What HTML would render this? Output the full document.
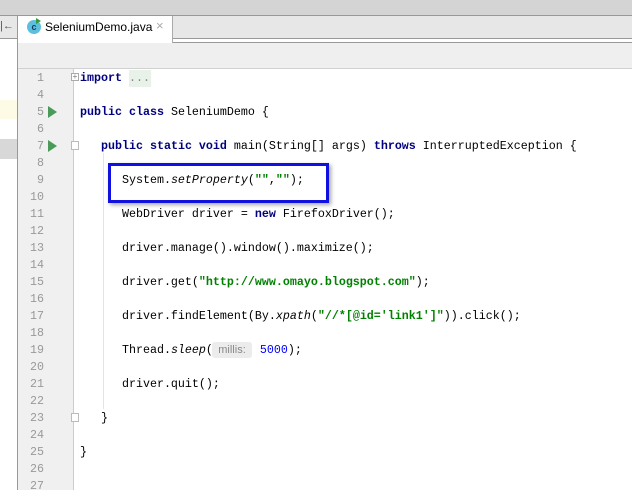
<!DOCTYPE html>
<html><head><style>
body{margin:0;width:632px;height:490px;overflow:hidden;background:#fff;position:relative;font-family:"Liberation Mono",monospace}
div{position:absolute;box-sizing:border-box}
.ln{left:18px;width:26px;text-align:right;color:#999;font-size:11.67px;line-height:17px}
.c{left:80px;font-size:11.67px;line-height:17px;white-space:pre;color:#000}
.k{color:#000080;font-weight:bold}
.s{color:#008000;font-weight:bold}
.i{font-style:italic}
.n{color:#0000ff}
.run{width:0;height:0;border-left:9px solid #4a9a5a;border-top:6px solid transparent;border-bottom:6px solid transparent;left:48px}
</style></head><body>
<div style="left:0;top:0;width:632px;height:15px;background:#d4d4d4"></div>
<div style="left:0;top:15px;width:632px;height:1px;background:#999"></div>
<div style="left:0;top:16px;width:632px;height:22px;background:#e7e7e7"></div>
<div style="left:0;top:38px;width:632px;height:1px;background:#999"></div>
<div style="left:0;top:42px;width:632px;height:1px;background:#999"></div>
<div style="left:0;top:43px;width:632px;height:25px;background:#efefef"></div>
<div style="left:0;top:68px;width:632px;height:1px;background:#d0d0d0"></div>
<!-- left panel -->
<div style="left:0;top:39px;width:17px;height:451px;background:#fff"></div>
<div style="left:0;top:100px;width:17px;height:19px;background:#fdfbe6"></div>
<div style="left:0;top:139px;width:17px;height:20px;background:#d8d8d8"></div>
<div style="left:17px;top:16px;width:1px;height:474px;background:#999"></div>
<div style="left:0;top:20px;font-family:'Liberation Sans',sans-serif;font-size:11px;color:#555">|←</div>
<!-- tab -->
<div style="left:18px;top:16px;width:155px;height:27px;background:#fff;border-right:1px solid #aaa"></div>
<div style="left:27px;top:20px;width:14px;height:14px;border-radius:50%;background:#5bc0de;color:#1a3a5a;font:bold 9px 'Liberation Sans',sans-serif;text-align:center;line-height:14px">c</div>
<div style="left:36px;top:18px;width:0;height:0;border-left:5px solid #3a9a3a;border-top:3px solid transparent;border-bottom:3px solid transparent"></div>
<div style="left:45px;top:20px;font:12px 'Liberation Sans',sans-serif;color:#000">SeleniumDemo.java</div>
<div style="left:156px;top:18px;font:13px 'Liberation Sans',sans-serif;color:#aaa">×</div>
<!-- gutter -->
<div style="left:18px;top:69px;width:56px;height:421px;background:#f0f0f0;border-right:1px solid #ccc"></div>
<div style="left:103px;top:153px;width:1px;height:256px;background:#e4e4e4"></div>
<div class="ln" style="top:70px">1<br>4<br>5<br>6<br>7<br>8<br>9<br>10<br>11<br>12<br>13<br>14<br>15<br>16<br>17<br>18<br>19<br>20<br>21<br>22<br>23<br>24<br>25<br>26<br>27</div>
<div class="run" style="top:106px"></div>
<div class="run" style="top:140px"></div>
<div style="left:71px;top:73px;width:8px;height:8px;border:1px solid #aaa;background:#fff;font:8px/6px sans-serif;color:#777;text-align:center">+</div>
<div style="left:71px;top:141px;width:8px;height:9px;border:1px solid #bbb;background:#fff"></div>
<div style="left:71px;top:413px;width:8px;height:9px;border:1px solid #bbb;background:#fff"></div>
<div style="left:129px;top:70px;width:22px;height:17px;background:#e8f2e8"></div>
<div class="c" style="top:70px"><span class="k">import</span> <span style="color:#888">...</span>

<span class="k">public class</span> SeleniumDemo {

   <span class="k">public static void</span> main(String[] args) <span class="k">throws</span> InterruptedException {

      System.<span class="i">setProperty</span>(<span class="s">""</span>,<span class="s">""</span>);

      WebDriver driver = <span class="k">new</span> FirefoxDriver();

      driver.manage().window().maximize();

      driver.get(<span class="s">"http://www.omayo.blogspot.com"</span>);

      driver.findElement(By.<span class="i">xpath</span>(<span class="s">"//*[@id='link1']"</span>)).click();

      Thread.<span class="i">sleep</span>(<span style="display:inline-block;width:40px"></span> <span class="n">5000</span>);

      driver.quit();

   }

}
</div>
<div style="left:212px;top:342px;width:40px;height:16px;background:#ececec;border-radius:3px;font:11px/16px 'Liberation Sans',sans-serif;color:#888;text-align:center">millis:</div>
<div style="left:108px;top:163px;width:221px;height:40px;border:3px solid #1010e0;box-shadow:2px 2px 4px rgba(0,0,0,.35)"></div>
</body></html>
